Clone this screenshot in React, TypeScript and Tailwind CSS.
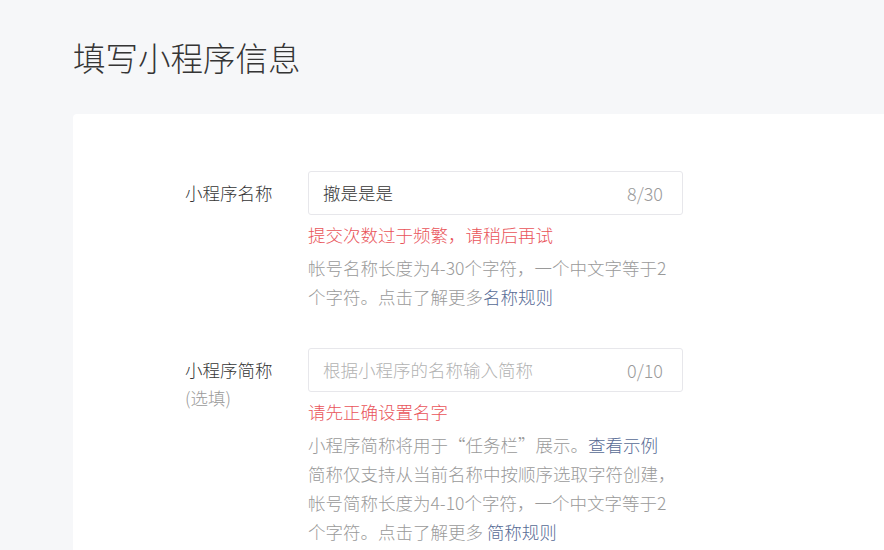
import React from "react";

const font = { fontFamily: '"Noto Sans CJK SC", "Noto Sans", sans-serif' };

export default function App() {
  return (
    <div
      className="min-h-[550px] w-full bg-[#f6f7f9] pl-[73px] overflow-hidden font-light"
      style={font}
    >
      <div className="pt-[35px] text-[32.5px] leading-[44px] text-[#353535]">
        填写小程序信息
      </div>
      <div className="mt-[35px] min-h-[500px] rounded-tl-[4px] bg-white pt-[57px] pl-[112px]">
        {/* Row 1 */}
        <div className="flex">
          <div className="w-[123px] pt-[8px] text-[17.5px] leading-[28px] text-[#353535]">
            小程序名称
          </div>
          <div className="w-[375px]">
            <div className="flex h-[44px] items-center justify-between rounded-[3px] border border-[#e7e7eb] pl-[14px] pr-[19px] text-[17.5px]">
              <span className="text-[#353535]">撤是是是</span>
              <span className="text-[#9a9a9a] text-[18px]">8/30</span>
            </div>
            <div className="mt-[6px] text-[17.5px] leading-[28px] text-[#e9545a] whitespace-nowrap">
              提交次数过于频繁，请稍后再试
            </div>
            <div className="mt-[4px] text-[17.5px] leading-[29px] text-[#9a9a9a] whitespace-nowrap">
              <div>帐号名称长度为4-30个字符，一个中文字等于2</div>
              <div>
                个字符。点击了解更多<span className="text-[#576b95]">名称规则</span>
              </div>
            </div>
          </div>
        </div>
        {/* Row 2 */}
        <div className="mt-[37px] flex">
          <div className="w-[123px] pt-[8px] text-[17.5px] leading-[28px] text-[#353535]">
            <div>小程序简称</div>
            <div className="text-[#9a9a9a]">(选填)</div>
          </div>
          <div className="w-[375px]">
            <div className="flex h-[44px] items-center justify-between rounded-[3px] border border-[#e7e7eb] pl-[14px] pr-[19px] text-[17.5px]">
              <span className="text-[#b2b2b2]">根据小程序的名称输入简称</span>
              <span className="text-[#9a9a9a] text-[18px]">0/10</span>
            </div>
            <div className="mt-[6px] text-[17.5px] leading-[28px] text-[#e9545a] whitespace-nowrap">
              请先正确设置名字
            </div>
            <div className="mt-[4px] text-[17.5px] leading-[29px] text-[#9a9a9a] whitespace-nowrap">
              <div>
                小程序简称将用于“任务栏”展示。<span className="text-[#576b95]">查看示例</span>
              </div>
              <div>简称仅支持从当前名称中按顺序选取字符创建，</div>
              <div>帐号简称长度为4-10个字符，一个中文字等于2</div>
              <div>
                个字符。点击了解更多 <span className="text-[#576b95]">简称规则</span>
              </div>
            </div>
          </div>
        </div>
      </div>
    </div>
  );
}
